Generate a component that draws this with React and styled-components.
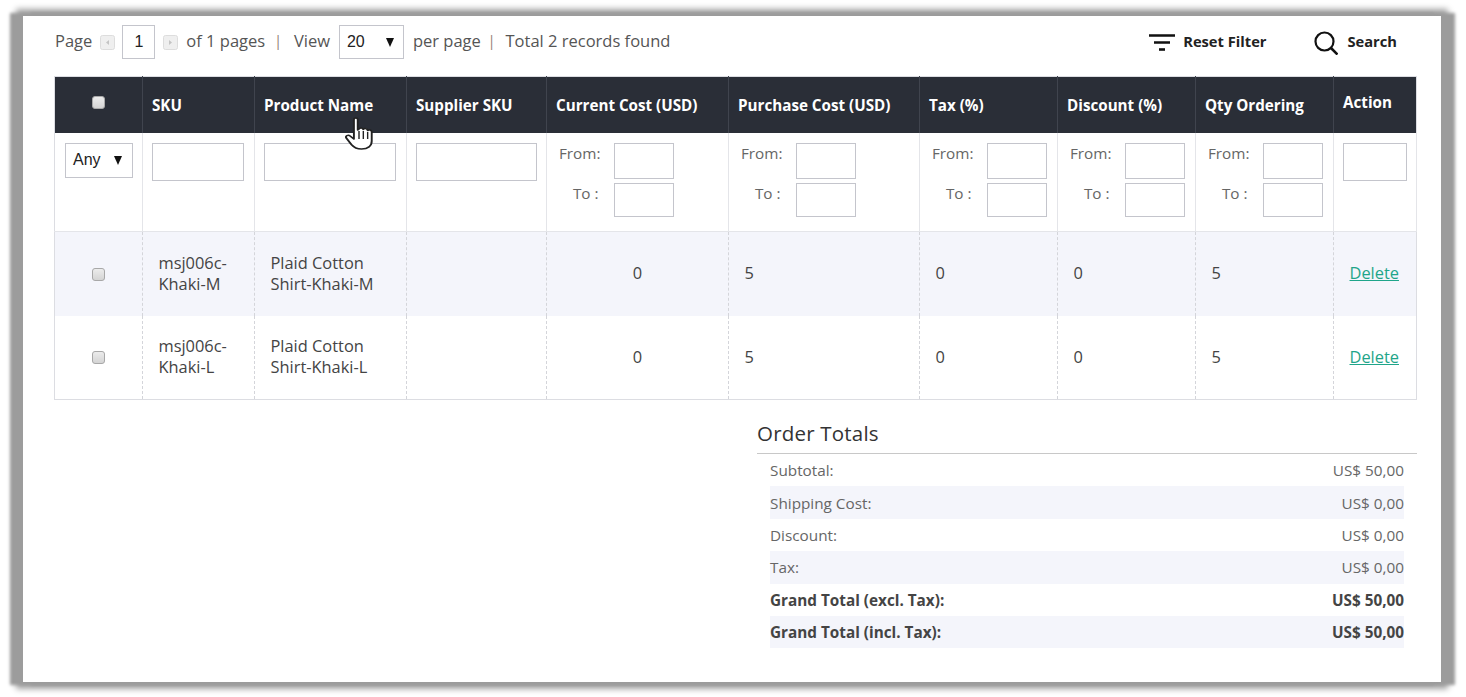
import React from 'react';
import styled, { createGlobalStyle } from 'styled-components';

const GlobalStyle = createGlobalStyle`
  html, body { margin: 0; padding: 0; background: #fff; }
  body { font-family: "Open Sans", "Liberation Sans", sans-serif; color: #444; }
`;

const Page = styled.div`
  width: 1466px;
  height: 697px;
  padding: 16px 25px 15px 23px;
  box-sizing: border-box;
  overflow: hidden;
`;

const Frame = styled.div`
  position: relative;
  height: 100%;
  background: #fff;
  padding: 9px 24px 0 31px;
  box-sizing: border-box;
  box-shadow: -10px 0 3px 3px #9c9c9c, 11px 0 3px 3px #9c9c9c, 0 0 6px 7px #a4a4a4;
`;

const Toolbar = styled.div`
  display: flex;
  align-items: center;
  height: 30px;
  margin-bottom: 21px;
  padding-left: 1px;
  font-size: 16.5px;
  color: #555;
`;

const PagerIcon = styled.svg`
  width: 15px;
  height: 15px;
  margin: 4px ${({ $mr }) => $mr}px 0 ${({ $ml }) => $ml}px;
`;

const BoxInput = styled.input`
  box-sizing: border-box;
  width: ${({ $w }) => $w}px;
  height: ${({ $h }) => $h}px;
  border: 1px solid #c4c5cc;
  background: #fff;
  padding: 0;
  font-family: "Liberation Sans", sans-serif;
  font-size: 16px;
  color: #222;
  text-align: center;
  outline: none;
  display: block;
`;

const PageInput = styled(BoxInput)`
  margin-top: 4px;
`;

const Sep = styled.span`
  color: #8f7a70;
  font-size: 14px;
  margin: ${({ $m }) => $m};
`;

const SelectWrap = styled.div`
  position: relative;
  width: ${({ $w }) => $w}px;
  height: ${({ $h }) => $h}px;
  border: 1px solid #c4c5cc;
  box-sizing: border-box;
  margin: ${({ $m }) => $m || 0};
  background: #fff;
  display: flex;
  align-items: center;
  padding-left: 7px;
  font-family: "Liberation Sans", sans-serif;
  font-size: 16px;
  color: #222;
`;

const Arrow = styled.span`
  position: absolute;
  right: ${({ $r }) => $r}px;
  top: 50%;
  width: 0;
  height: 0;
  margin-top: -4px;
  border-left: 4.5px solid transparent;
  border-right: 4.5px solid transparent;
  border-top: 9px solid #111;
`;

const Spacer = styled.div`
  flex: 1;
`;

const ToolButton = styled.div`
  display: flex;
  align-items: center;
  margin-top: 2px;
  font-size: 14.7px;
  font-weight: 700;
  color: #222;
  margin-right: ${({ $mr }) => $mr}px;
  gap: ${({ $gap }) => $gap}px;
`;

const ToolIcon = styled.svg`
  margin-top: 3px;
`;

const Grid = styled.table`
  width: 1362px;
  table-layout: fixed;
  border-collapse: collapse;
  border: 1px solid #dcdde2;
  font-size: 16.4px;
`;

const HeadCell = styled.th`
  background: #2a2e37;
  color: #fff;
  height: 56px;
  padding: ${({ $top }) => ($top ? '0 9px 6px' : '0 9px')};
  box-sizing: border-box;
  text-align: ${({ $center }) => ($center ? 'center' : 'left')};
  font-size: 15.2px;
  font-weight: 700;
  border-right: 1px solid #40444e;
  white-space: nowrap;
  &:last-child { border-right: 0; }
`;

const FilterCell = styled.td`
  height: 99px;
  box-sizing: border-box;
  vertical-align: top;
  padding: 10px 9px 0;
  border-right: 1px solid #e4e5e9;
  border-bottom: 1px solid #e4e5e9;
  &:first-child { padding-left: 10px; }
`;

const RangeRow = styled.div`
  display: flex;
  align-items: flex-start;
  gap: 13.5px;
  margin-bottom: 4px;
  padding-left: 1px;
  font-size: 15.3px;
  color: #666;
`;

const RangeLabel = styled.span`
  width: 43.5px;
  box-sizing: border-box;
  text-align: right;
  padding-right: ${({ $pr }) => $pr || 0}px;
`;

const Row = styled.tr`
  background: ${({ $alt }) => ($alt ? '#f4f5fb' : '#fff')};
`;

const Cell = styled.td`
  height: 84px;
  box-sizing: border-box;
  padding: 0 15.5px 2px;
  line-height: 21px;
  color: #444;
  text-align: ${({ $align }) => $align || 'left'};
  border-right: 1px dashed #d4d5da;
  &:last-child { border-right: 0; }
`;

const CheckCell = styled(Cell)`
  padding-bottom: 0;
`;

const DeleteLink = styled.a`
  color: #1fa58a;
  text-decoration: underline;
`;

const Check = styled.input.attrs({ type: 'checkbox' })`
  appearance: none;
  display: block;
  width: 13px;
  height: 13px;
  margin: 1px auto 0;
  border: 1px solid #a8a8a8;
  border-radius: 3px;
  background: linear-gradient(#ececec, #d4d4d4);
`;

const Totals = styled.div`
  width: 660px;
  margin-left: auto;
  margin-top: 17px;
`;

const TotalsTitle = styled.div`
  font-size: 20.5px;
  line-height: 32px;
  padding-bottom: 4px;
  letter-spacing: 0.2px;
  color: #333;
  border-bottom: 1px solid #c8c8c8;
`;

const TotalsList = styled.div`
  padding: 0 13px;
`;

const TotalRow = styled.div`
  display: flex;
  justify-content: space-between;
  align-items: center;
  height: 32.4px;
  font-size: 15.3px;
  color: ${({ $bold }) => ($bold ? '#444' : '#666')};
  font-weight: ${({ $bold }) => ($bold ? 700 : 400)};
  background: ${({ $alt }) => ($alt ? '#f4f5fb' : 'transparent')};
`;

const Pointer = styled.svg`
  position: absolute;
  left: 322px;
  top: 101px;
`;

const columns = [88, 112, 152, 140, 182, 191, 138, 138, 138, 83];

const RangeFilter = () => (
  <>
    <RangeRow>
      <RangeLabel>From:</RangeLabel>
      <BoxInput $w={60} $h={36} />
    </RangeRow>
    <RangeRow>
      <RangeLabel $pr={2}>To :</RangeLabel>
      <BoxInput $w={60} $h={34} />
    </RangeRow>
  </>
);

const products = [
  { sku: 'msj006c-Khaki-M', name: 'Plaid Cotton Shirt-Khaki-M', alt: true },
  { sku: 'msj006c-Khaki-L', name: 'Plaid Cotton Shirt-Khaki-L', alt: false },
];

const totals = [
  { label: 'Subtotal:', value: 'US$ 50,00' },
  { label: 'Shipping Cost:', value: 'US$ 0,00', alt: true },
  { label: 'Discount:', value: 'US$ 0,00' },
  { label: 'Tax:', value: 'US$ 0,00', alt: true },
  { label: 'Grand Total (excl. Tax):', value: 'US$ 50,00', bold: true },
  { label: 'Grand Total (incl. Tax):', value: 'US$ 50,00', bold: true, alt: true },
];

const App = () => (
  <Page>
    <GlobalStyle />
    <Frame>
      <Toolbar>
        Page
        <PagerIcon viewBox="0 0 15 15" $ml={7.5} $mr={7.5}>
          <rect x="0.5" y="0.5" width="14" height="14" rx="2" fill="#efefef" stroke="#ddd" />
          <path d="M9 5 L6 7.5 L9 10 Z" fill="#c4c4c4" />
        </PagerIcon>
        <PageInput $w={33} $h={34} defaultValue="1" />
        <PagerIcon viewBox="0 0 15 15" $ml={7.5} $mr={8.5}>
          <rect x="0.5" y="0.5" width="14" height="14" rx="2" fill="#efefef" stroke="#ddd" />
          <path d="M6 5 L9 7.5 L6 10 Z" fill="#c4c4c4" />
        </PagerIcon>
        of 1 pages
        <Sep $m="0 12px 0 9px">|</Sep>
        View
        <SelectWrap $w={65} $h={34} $m="4px 9px 0 9px">
          20
          <Arrow $r={9} />
        </SelectWrap>
        per page
        <Sep $m="0 10px 0 7px">|</Sep>
        Total 2 records found
        <Spacer />
        <ToolButton $mr={48} $gap={8}>
          <ToolIcon width="26" height="18" viewBox="0 0 26 18">
            <path d="M0 1.5 H26 M5 8.5 H21" stroke="#111" strokeWidth="2.6" />
            <path d="M10 15.5 H16" stroke="#111" strokeWidth="2.6" />
          </ToolIcon>
          Reset Filter
        </ToolButton>
        <ToolButton $mr={20} $gap={9}>
          <ToolIcon width="24" height="24" viewBox="0 0 24 24" fill="none">
            <circle cx="10.5" cy="10.5" r="9" stroke="#111" strokeWidth="2.2" />
            <path d="M17 17 L23.5 23.5" stroke="#111" strokeWidth="2.6" />
          </ToolIcon>
          Search
        </ToolButton>
      </Toolbar>

      <Grid>
        <colgroup>
          {columns.map((w, i) => (
            <col key={i} style={{ width: w }} />
          ))}
        </colgroup>
        <thead>
          <tr>
            <HeadCell $center $top><Check /></HeadCell>
            <HeadCell>SKU</HeadCell>
            <HeadCell>Product Name</HeadCell>
            <HeadCell>Supplier SKU</HeadCell>
            <HeadCell>Current Cost (USD)</HeadCell>
            <HeadCell>Purchase Cost (USD)</HeadCell>
            <HeadCell>Tax (%)</HeadCell>
            <HeadCell>Discount (%)</HeadCell>
            <HeadCell>Qty Ordering</HeadCell>
            <HeadCell $top>Action</HeadCell>
          </tr>
        </thead>
        <tbody>
          <tr>
            <FilterCell>
              <SelectWrap $w={68} $h={35}>
                Any
                <Arrow $r={10} />
              </SelectWrap>
            </FilterCell>
            <FilterCell><BoxInput $w={92} $h={38} /></FilterCell>
            <FilterCell><BoxInput $w={132} $h={38} /></FilterCell>
            <FilterCell><BoxInput $w={121} $h={38} /></FilterCell>
            <FilterCell><RangeFilter /></FilterCell>
            <FilterCell><RangeFilter /></FilterCell>
            <FilterCell><RangeFilter /></FilterCell>
            <FilterCell><RangeFilter /></FilterCell>
            <FilterCell><RangeFilter /></FilterCell>
            <FilterCell><BoxInput $w={64} $h={38} /></FilterCell>
          </tr>
          {products.map((p) => (
            <Row key={p.sku} $alt={p.alt}>
              <CheckCell><Check /></CheckCell>
              <Cell>{p.sku}</Cell>
              <Cell>{p.name}</Cell>
              <Cell />
              <Cell $align="center">0</Cell>
              <Cell>5</Cell>
              <Cell>0</Cell>
              <Cell>0</Cell>
              <Cell>5</Cell>
              <Cell><DeleteLink>Delete</DeleteLink></Cell>
            </Row>
          ))}
        </tbody>
      </Grid>

      <Totals>
        <TotalsTitle>Order Totals</TotalsTitle>
        <TotalsList>
          {totals.map((t) => (
            <TotalRow key={t.label} $alt={t.alt} $bold={t.bold}>
              <span>{t.label}</span>
              <span>{t.value}</span>
            </TotalRow>
          ))}
        </TotalsList>
      </Totals>

      <Pointer width="28" height="34" viewBox="0 0 22 34" preserveAspectRatio="none">
        <path
          d="M7 2.5 C7 0.5 10 0.5 10 2.5 V13 L11 12 C11.5 10.5 14 10.5 14.3 12.5 C15 11 17.5 11.3 17.8 13.5 C18.5 12.5 21 12.8 21 15 V24 C21 29 18 32 13 32 C9 32 7 30.5 5 27.5 L1 21 C0 19 2.5 17.5 4 19 L7 22 Z"
          fill="#fff"
          stroke="#222"
          strokeWidth="1.5"
          strokeLinejoin="round"
        />
        <path d="M11 14 V22 M14.4 14 V22 M17.8 15 V22" stroke="#222" strokeWidth="1.1" />
      </Pointer>
    </Frame>
  </Page>
);

export default App;
